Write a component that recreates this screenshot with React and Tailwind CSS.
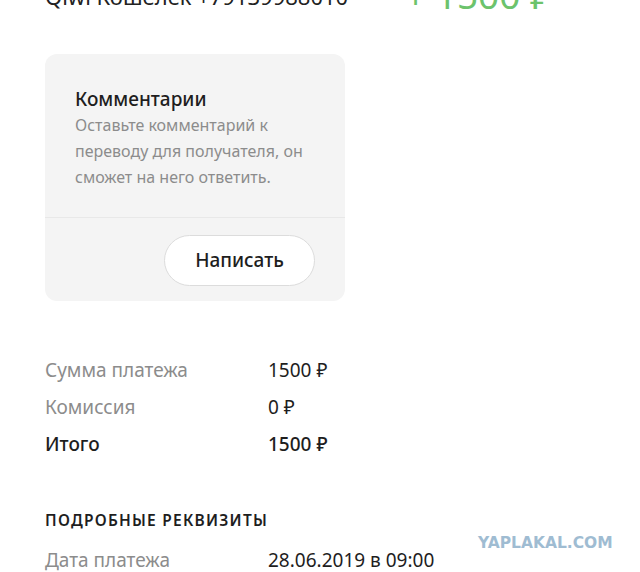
export default function App() {
  const font = { fontFamily: '"Noto Sans", "Open Sans", sans-serif' };
  return (
    <div className="w-[640px] h-[572px] bg-white overflow-hidden relative" style={font}>
      <div className="flex items-end px-[45px] -mt-[16px] h-[24px]">
        <div className="text-[22px] leading-[24px] text-[#222] w-[360px]">Qiwi Кошелек +79139988010</div>
        <div className="text-[37px] leading-[26px] text-[#6cc36c]">+ 1500 ₽</div>
      </div>

      <div className="ml-[45px] mt-[46px] w-[300px] h-[247px] rounded-[12px] bg-[#f4f4f4] flex flex-col">
        <div className="px-[30px] pt-[32px] h-[164px] border-b border-[#e8e8e8]">
          <div className="text-[19px] leading-[26px] font-medium text-[#1e1e1e]">Комментарии</div>
          <div className="text-[16px] leading-[26px] text-[#8c8c8c]">
            Оставьте комментарий к переводу для получателя, он сможет на него ответить.
          </div>
        </div>
        <div className="flex justify-end pr-[30px] pt-[17px]">
          <button className="w-[151px] h-[51px] rounded-full bg-white border border-[#dcdcdc] text-[19px] font-medium text-[#1e1e1e]">
            Написать
          </button>
        </div>
      </div>

      <div className="ml-[45px] mt-[56px] flex flex-col gap-[11px] text-[19px] leading-[26px]">
        <div className="flex"><span className="w-[223px] text-[#8c8c8c]">Сумма платежа</span><span className="text-[#1e1e1e]">1500 ₽</span></div>
        <div className="flex"><span className="w-[223px] text-[#8c8c8c]">Комиссия</span><span className="text-[#1e1e1e]">0 ₽</span></div>
        <div className="flex"><span className="w-[223px] text-[#1e1e1e] font-medium">Итого</span><span className="text-[#1e1e1e] font-medium">1500 ₽</span></div>
      </div>

      <div className="ml-[45px] mt-[52px] text-[15.5px] leading-[22px] font-semibold tracking-[0.08em] text-[#1e1e1e]">ПОДРОБНЫЕ РЕКВИЗИТЫ</div>

      <div className="ml-[45px] mt-[16px] flex text-[19px] leading-[26px]">
        <span className="w-[223px] text-[#8c8c8c]">Дата платежа</span>
        <span className="text-[#1e1e1e]">28.06.2019 в 09:00</span>
      </div>

      <div className="absolute left-[478px] top-[532px] text-[15.5px] font-black text-[#9fbcd2]" style={{ fontFamily: '"DejaVu Sans", sans-serif' }}>YAPLAKAL.COM</div>
    </div>
  );
}
